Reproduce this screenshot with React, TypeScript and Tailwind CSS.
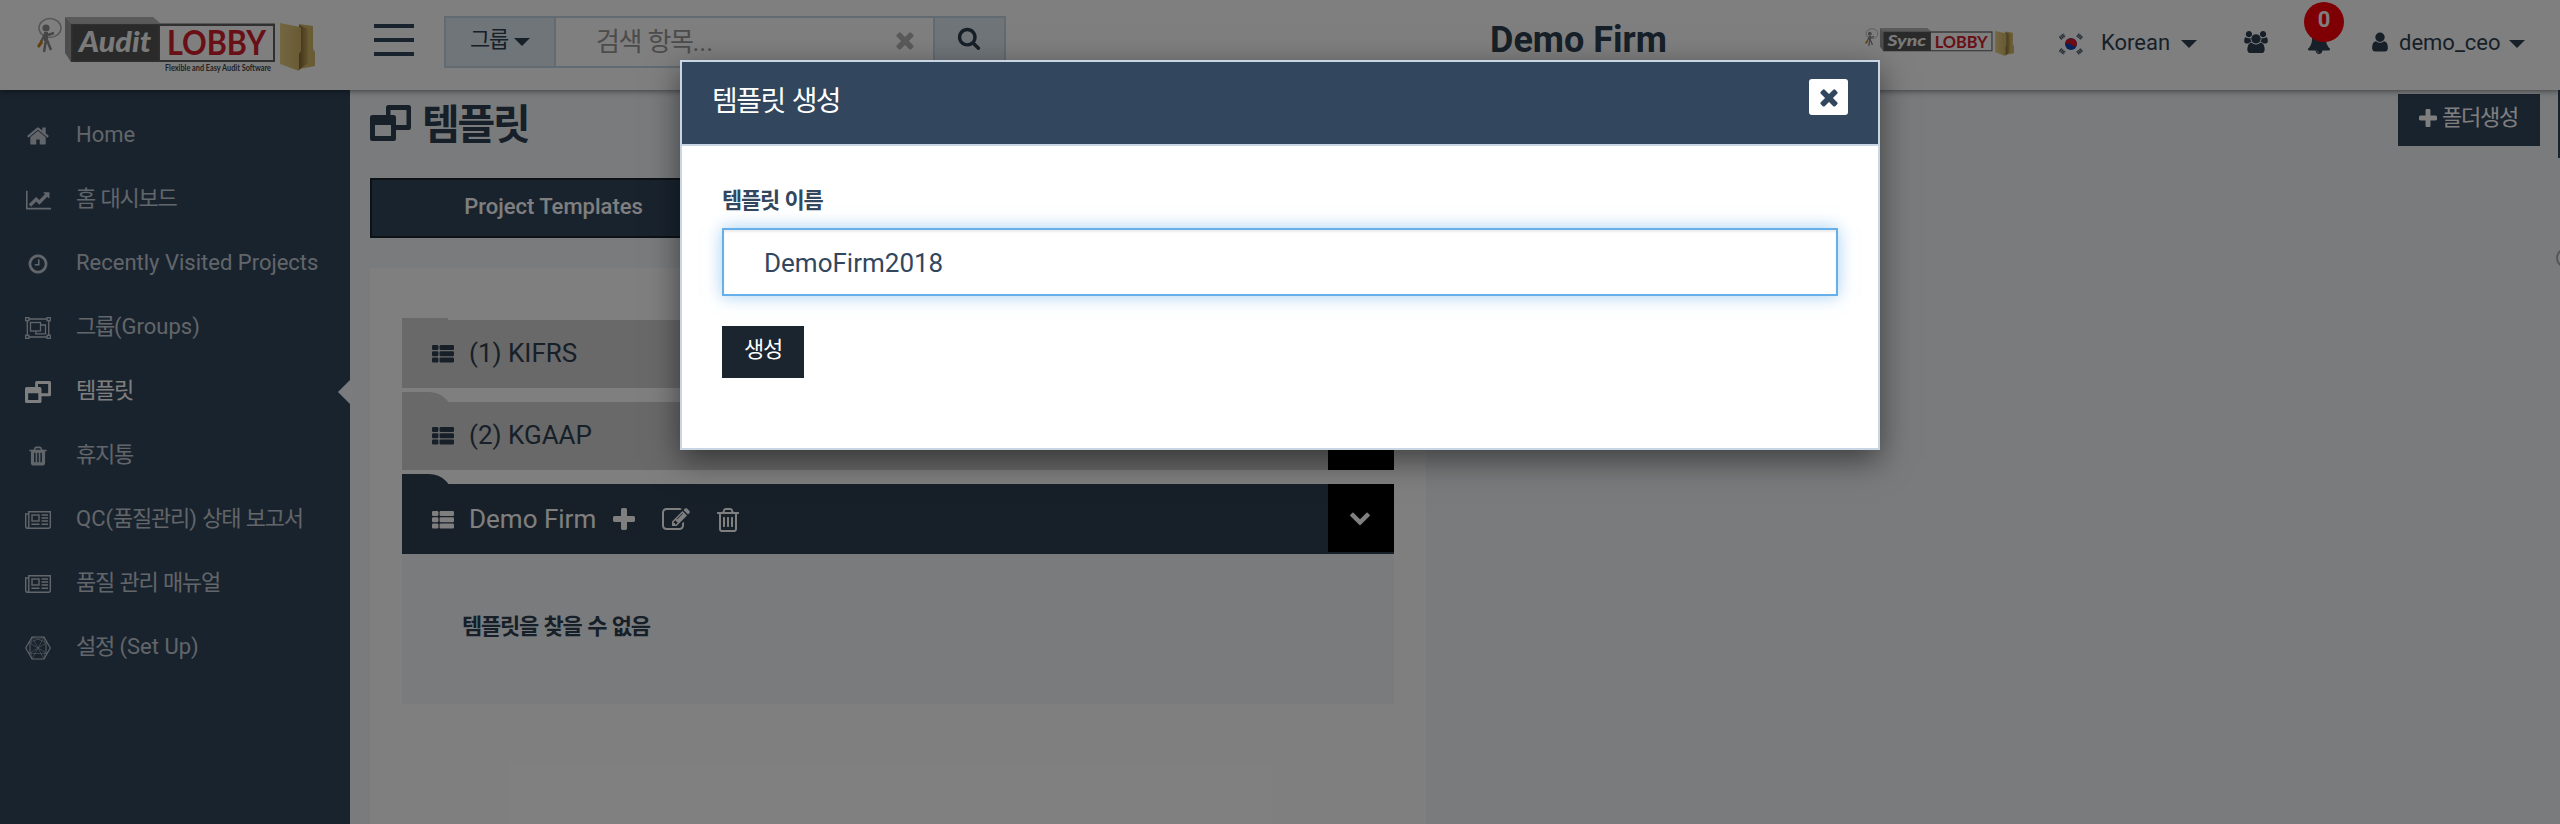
import React from "react";

type IconProps = { className?: string; box?: string; d: string };

const Icon = ({ className = "", box = "0 0 1792 1792", d }: IconProps) => (
  <svg viewBox={box} className={`shrink-0 ${className}`} fill="currentColor" aria-hidden="true">
    <path d={d} />
  </svg>
);

const TIMES =
  "M1490 1322q0 40-28 68l-136 136q-28 28-68 28t-68-28l-294-294-294 294q-28 28-68 28t-68-28l-136-136q-28-28-28-68t28-68l294-294-294-294q-28-28-28-68t28-68l136-136q28-28 68-28t68 28l294 294 294-294q28-28 68-28t68 28l136 136q28 28 28 68t-28 68l-294 294 294 294q28 28 28 68z";
const PLUS =
  "M1600 736v192q0 40-28 68t-68 28h-416v416q0 40-28 68t-68 28h-192q-40 0-68-28t-28-68v-416h-416q-40 0-68-28t-28-68v-192q0-40 28-68t68-28h416v-416q0-40 28-68t68-28h192q40 0 68 28t28 68v416h416q40 0 68 28t28 68z";
const HOME =
  "M1472 992v480q0 26-19 45t-45 19h-384v-384h-256v384h-384q-26 0-45-19t-19-45v-480q0-1 .5-3t.5-3l575-474 575 474q1 2 1 6zm223-69l-62 74q-8 9-21 11h-3q-13 0-21-7l-692-577-692 577q-12 8-24 7-13-2-21-11l-62-74q-8-10-7-23.5t11-21.5l719-599q32-26 76-26t76 26l244 204v-195q0-14 9-23t23-9h192q14 0 23 9t9 23v408l219 182q10 8 11 21.5t-7 23.5z";
const LINE_CHART =
  "M1920 1536v128h-2048v-1536h128v1408h1920zm-128-1248v435q0 21-19.5 29.5t-35.5-7.5l-121-121-633 633q-10 10-23 10t-23-10l-233-233-416 416-192-192 585-585q10-10 23-10t23 10l233 233 464-464-121-121q-16-16-7.5-35.5t29.5-19.5h435q14 0 23 9t9 23z";
const CLOCK =
  "M1024 544v448q0 14-9 23t-23 9h-320q-14 0-23-9t-9-23v-64q0-14 9-23t23-9h224v-352q0-14 9-23t23-9h64q14 0 23 9t9 23zm416 352q0-148-73-273t-198-198-273-73-273 73-198 198-73 273 73 273 198 198 273 73 273-73 198-198 73-273zm224 0q0 209-103 385.5t-279.5 279.5-385.5 103-385.5-103-279.5-279.5-103-385.5 103-385.5 279.5-279.5 385.5-103 385.5 103 279.5 279.5 103 385.5z";
const SEARCH =
  "M1216 832q0-185-131.5-316.5t-316.5-131.5-316.5 131.5-131.5 316.5 131.5 316.5 316.5 131.5 316.5-131.5 131.5-316.5zm512 832q0 52-38 90t-90 38q-54 0-90-38l-343-342q-179 124-399 124-143 0-273.5-55.5t-225-150-150-225-55.5-273.5 55.5-273.5 150-225 225-150 273.5-55.5 273.5 55.5 225 150 150 225 55.5 273.5q0 220-124 399l343 343q37 37 37 90z";
const USER =
  "M1536 1399q0 109-62.5 187t-150.5 78h-854q-88 0-150.5-78t-62.5-187q0-85 8.5-160.5t31.5-152 58.5-131 94-89 134.5-34.5q131 128 313 128t313-128q76 0 134.5 34.5t94 89 58.5 131 31.5 152 8.5 160.5zm-256-887q0 159-112.5 271.5t-271.5 112.5-271.5-112.5-112.5-271.5 112.5-271.5 271.5-112.5 271.5 112.5 112.5 271.5z";
const USERS =
  "M657 896q-162 5-265 128h-134q-82 0-138-40.5t-56-118.5q0-353 124-353 6 0 43.5 21t97.5 42.5 119 21.5q67 0 133-23-5 37-5 66 0 139 81 256zm1071 637q0 120-73 189.5t-194 69.5h-874q-121 0-194-69.5t-73-189.5q0-53 3.5-103.5t14-109 26.5-108.5 43-97.5 62-81 85.5-53.5 111.5-20q10 0 43 21.5t73 48 107 48 135 21.5 135-21.5 107-48 73-48 43-21.5q61 0 111.5 20t85.5 53.5 62 81 43 97.5 26.5 108.5 14 109 3.5 103.5zm-1024-1277q0 106-75 181t-181 75-181-75-75-181 75-181 181-75 181 75 75 181zm704 384q0 159-112.5 271.5t-271.5 112.5-271.5-112.5-112.5-271.5 112.5-271.5 271.5-112.5 271.5 112.5 112.5 271.5zm576 225q0 78-56 118.5t-138 40.5h-134q-103-123-265-128 81-117 81-256 0-29-5-66 66 23 133 23 59 0 119-21.5t97.5-42.5 43.5-21q124 0 124 353zm-128-609q0 106-75 181t-181 75-181-75-75-181 75-181 181-75 181 75 75 181z";
const EDIT =
  "M888 1184l116-116-152-152-116 116v56h96v96h56zm440-720q-16-16-33 1l-350 350q-17 17-1 33t33-1l350-350q17-17 1-33zm80 594v190q0 119-84.5 203.5t-203.5 84.5h-832q-119 0-203.5-84.5t-84.5-203.5v-832q0-119 84.5-203.5t203.5-84.5h832q63 0 117 25 15 7 18 23 3 17-9 29l-49 49q-14 14-32 8-23-6-45-6h-832q-66 0-113 47t-47 113v832q0 66 47 113t113 47h832q66 0 113-47t47-113v-126q0-13 9-22l64-64q15-15 35-7t20 29zm-96-738l288 288-672 672h-288v-288zm444 132l-92 92-288-288 92-92q28-28 68-28t68 28l152 152q28 28 28 68t-28 68z";
const TRASH_O =
  "M704 736v576q0 14-9 23t-23 9h-64q-14 0-23-9t-9-23v-576q0-14 9-23t23-9h64q14 0 23 9t9 23zm256 0v576q0 14-9 23t-23 9h-64q-14 0-23-9t-9-23v-576q0-14 9-23t23-9h64q14 0 23 9t9 23zm256 0v576q0 14-9 23t-23 9h-64q-14 0-23-9t-9-23v-576q0-14 9-23t23-9h64q14 0 23 9t9 23zm128 724v-948h-896v948q0 22 7 40.5t14.5 27 10.5 8.5h832q3 0 10.5-8.5t14.5-27 7-40.5zm-672-1076h448l-48-117q-7-9-17-11h-317q-10 2-17 11zm928 32v64q0 14-9 23t-23 9h-96v948q0 83-47 143.5t-113 60.5h-832q-66 0-113-58.5t-47-141.5v-952h-96q-14 0-23-9t-9-23v-64q0-14 9-23t23-9h309l70-167q15-37 54-63t79-26h320q40 0 79 26t54 63l70 167h309q14 0 23 9t9 23z";
const TRASH =
  "M704 1376v-704q0-14-9-23t-23-9h-64q-14 0-23 9t-9 23v704q0 14 9 23t23 9h64q14 0 23-9t9-23zm256 0v-704q0-14-9-23t-23-9h-64q-14 0-23 9t-9 23v704q0 14 9 23t23 9h64q14 0 23-9t9-23zm256 0v-704q0-14-9-23t-23-9h-64q-14 0-23 9t-9 23v704q0 14 9 23t23 9h64q14 0 23-9t9-23zm-544-992h448l-48-117q-7-9-17-11h-317q-10 2-17 11zm928 32v64q0 14-9 23t-23 9h-96v948q0 83-47 143.5t-113 60.5h-832q-66 0-113-58.5t-47-141.5v-952h-96q-14 0-23-9t-9-23v-64q0-14 9-23t23-9h309l70-167q15-37 54-63t79-26h320q40 0 79 26t54 63l70 167h309q14 0 23 9t9 23z";
const CHEVRON =
  "M1683 808l-742 741q-19 19-45 19t-45-19l-742-741q-19-19-19-45.5t19-45.5l166-165q19-19 45-19t45 19l531 531 531-531q19-19 45-19t45 19l166 165q19 19 19 45.5t-19 45.5z";
const BELL =
  "M912 1696q0-16-16-16-59 0-101.500-42.500t-42.500-101.500q0-16-16-16t-16 16q0 73 51.500 124.500t124.500 51.500q16 0 16-16zm816-288q0 52-38 90t-90 38h-448q0 106-75 181t-181 75-181-75-75-181h-448q-52 0-90-38t-38-90q50-42 91-88t85-119.500 74.500-158.500 50-206 19.500-260q0-152 117-282.500t307-158.500q-8-19-8-39 0-40 28-68t68-28 68 28 28 68q0 20-8 39 190 28 307 158.500t117 282.500q0 139 19.500 260t50 206 74.500 158.500 85 119.500 91 88z";

const ThList = ({ className = "" }: { className?: string }) => (
  <svg viewBox="0 0 22 18" className={`shrink-0 ${className}`} fill="currentColor" aria-hidden="true">
    {[0, 6.2, 12.4].map((y) => (
      <g key={y}>
        <rect x="0" y={y} width="6.4" height="5" rx="1.2" />
        <rect x="7.6" y={y} width="14.4" height="5" rx="1.2" />
      </g>
    ))}
  </svg>
);

const Windows = ({ className = "" }: { className?: string }) => (
  <svg viewBox="0 0 41 36" preserveAspectRatio="none" className={`shrink-0 ${className}`} aria-hidden="true">
    <path
      fill="currentColor"
      fillRule="evenodd"
      d="M18.500 0H38.500Q41 0 41 2.500V22.500Q41 25 38.500 25H26V33.500Q26 36 23.500 36H2.500Q0 36 0 33.500V12.500Q0 10 2.500 10H16V2.500Q16 0 18.500 0ZM20.500 5V10H23.500Q26 10 26 12.500V20H36.500V5ZM5 20V31H21V20Z"
    />
  </svg>
);

const ObjectGroup = ({ className = "" }: { className?: string }) => (
  <svg viewBox="0 0 26 22" className={`shrink-0 ${className}`} fill="none" stroke="currentColor" strokeWidth="1.300" aria-hidden="true">
    <path d="M4 2H22M4 20H22M2.300 4V18M23.700 4V18" />
    <rect x="0.700" y="0.700" width="3.200" height="3" />
    <rect x="22.100" y="0.700" width="3.200" height="3" />
    <rect x="0.700" y="18.300" width="3.200" height="3" />
    <rect x="22.100" y="18.300" width="3.200" height="3" />
    <rect x="5.500" y="5.500" width="10" height="8.500" />
    <path d="M15.500 8H20.500V16.800H10.800V14" />
  </svg>
);

const Newspaper = ({ className = "" }: { className?: string }) => (
  <svg viewBox="0 0 26 18" className={`shrink-0 ${className}`} fill="none" stroke="currentColor" strokeWidth="1.400" aria-hidden="true">
    <path d="M3.800 3H.7V15.300Q.7 17.300 2.300 17.300H23.500Q25.300 17.300 25.300 15.500V.7H3.800V15.300Q3.800 17.300 2.300 17.300" />
    <rect x="7" y="4" width="7" height="6" />
    <path d="M16.500 4H23M16.500 7H23M16.500 10H23M6.500 13.300H14.500M16.500 13.300H23" />
  </svg>
);

const Hexagon = ({ className = "" }: { className?: string }) => (
  <svg viewBox="0 0 26 24" className={`shrink-0 ${className}`} fill="none" stroke="currentColor" strokeWidth="0.500" aria-hidden="true">
    <path strokeWidth="1.100" d="M7 1H19L25.300 12 19 23H7L.7 12Z" />
    <path d="M7 1L19 23M19 1L7 23M7 1L4 17.500 13 12 22 6.500 7 1M19 1L4 6.500 13 12 22 17.500 19 1M4 17.500H22M4 6.500L7 23M22 6.500L19 23" />
  </svg>
);

const Caret = ({ className = "" }: { className?: string }) => (
  <svg viewBox="0 0 16 8" className={`h-2 w-4 shrink-0 ${className}`} fill="currentColor" aria-hidden="true">
    <path d="M0 0H16L8 8Z" />
  </svg>
);

/* Hangul runs are set slightly tighter than Latin ones. */
const T = ({ children }: { children: string }) => (
  <>
    {children.split(/([가-힣]+)/).map((run, i) =>
      i % 2 ? (
        <span key={i} className="tracking-[-0.055em]">
          {run}
        </span>
      ) : (
        run
      ),
    )}
  </>
);

const Logo = ({ word, tagline, className }: { word: string; tagline?: string; className: string }) => (
  <svg viewBox="0 0 280 58" preserveAspectRatio="none" className={`shrink-0 ${className}`} aria-hidden="true">
    <defs>
      <linearGradient id="folder" x1="0" x2="1">
        <stop offset="0" stopColor="#e6cf86" />
        <stop offset="1" stopColor="#d2b464" />
      </linearGradient>
      <linearGradient id="fold" x1="0" x2="1">
        <stop offset="0" stopColor="#7d6835" />
        <stop offset="1" stopColor="#caab5c" />
      </linearGradient>
    </defs>
    <g fill="none" stroke="#8c8c8c">
      <ellipse cx="13" cy="11" rx="11" ry="9.500" strokeWidth="1.600" stroke="#b0b0b0" />
      <path strokeWidth="4" d="M9 15V24" />
      <path strokeWidth="2.500" d="M9 23L7 35M10 23L14 33M8 17L4 25M11 18L17 16" />
    </g>
    <circle cx="9" cy="11" r="3.600" fill="#909090" />
    <path d="M4 23L0 29 2 31 6 26Z" fill="#c98218" />
    <path d="M28 0H116L123 6H34Z" fill="#b5b5b5" />
    <path d="M28 0L34 6V45L28 36Z" fill="#9b9b9b" />
    <rect x="34" y="6.500" width="204" height="38.500" fill="#606060" />
    <rect x="123" y="9" width="113" height="34" fill="#fff" />
    <rect x="35.500" y="8" width="86" height="35.500" fill="#555" />
    <text x="42" y="35" fontFamily="Lato, sans-serif" fontWeight="900" fontStyle="italic" fontSize="28" fill="#f4f4f4" textLength="72" lengthAdjust="spacingAndGlyphs">
      {word}
    </text>
    <text x="130" y="38" fontFamily="Lato, sans-serif" fontWeight="700" fontSize="34" fill="#d2202e" textLength="99" lengthAdjust="spacingAndGlyphs">
      LOBBY
    </text>
    {tagline && (
      <text x="128" y="54" fontFamily="Lato, sans-serif" fontWeight="700" fontSize="8.500" fill="#444" textLength="106" lengthAdjust="spacingAndGlyphs">
        {tagline}
      </text>
    )}
    <path d="M262 7L276 9V32L278 35V49L262 52Z" fill="#d3b666" />
    <path d="M262 8L271 12V46L262 53Z" fill="url(#fold)" />
    <path d="M243 6L263 10Q264 10 264 12V34L262 37V54L243 47Z" fill="url(#folder)" />
  </svg>
);

const Flag = () => (
  <svg viewBox="0 0 24 22" className="h-[22px] w-6 shrink-0" aria-hidden="true">
    <circle cx="12" cy="11" r="6" fill="#1540b0" />
    <path d="M6.300 9.500A6 6 0 0 1 17.900 12Q15 14.500 12 11.500 9 8.500 6.300 12Z" fill="#e01525" />
    <g stroke="#4d5e6e" strokeWidth="4" strokeDasharray="1.400 0.400">
      <path d="M1 5.500L5.500 1.700M18.500 1.700L23 5.500M1 16.500L5.500 20.300M18.500 20.300L23 16.500" />
    </g>
  </svg>
);

const NAV = [
  { label: "Home", icon: <Icon d={HOME} className="size-6" /> },
  { label: "홈 대시보드", icon: <Icon d={LINE_CHART} box="-128 0 2048 1792" className="h-[22px] w-[25px]" /> },
  { label: "Recently Visited Projects", icon: <Icon d={CLOCK} className="size-[22px]" /> },
  { label: "그룹(Groups)", icon: <ObjectGroup className="h-[22px] w-[26px]" /> },
  { label: "템플릿", icon: <Windows className="h-[22px] w-[26px]" />, active: true },
  { label: "휴지통", icon: <Icon d={TRASH} className="size-[22px]" /> },
  { label: "QC(품질관리) 상태 보고서", icon: <Newspaper className="h-[18px] w-[26px]" /> },
  { label: "품질 관리 매뉴얼", icon: <Newspaper className="h-[18px] w-[26px]" /> },
  { label: "설정 (Set Up)", icon: <Hexagon className="h-6 w-[26px]" /> },
];

const Header = () => (
  <header className="relative z-10 flex h-[90px] shrink-0 items-start bg-white text-[#2e3e50] shadow-[0_1px_6px_rgba(0,0,0,0.5)]">
    <Logo word="Audit" tagline="Flexible and Easy Audit Software" className="mt-[17px] ml-[37px] h-[58px] w-[280px]" />
    <button className="mt-6 ml-[57px] flex w-10 flex-col gap-2.5">
      <span className="h-1 bg-[#32465d]" />
      <span className="h-1 bg-[#32465d]" />
      <span className="h-1 bg-[#32465d]" />
    </button>
    <div className="mt-4 ml-[30px] flex h-[52px] w-[562px] border-2 border-[#c5d6e2]">
      <button className="flex w-[110px] items-start border-r-2 border-[#c5d6e2] bg-[#e1ebf2] pl-6 text-[22px] leading-[44px]">
        <T>그룹</T>
        <Caret className="mt-5 ml-1.5" />
      </button>
      <div className="flex w-[377px] items-start bg-white pl-10 text-[26px] leading-[48px] text-[#999]">
        <span className="grow">
          <T>검색 항목...</T>
        </span>
        <Icon d={TIMES} className="mt-[9px] mr-[15px] size-[26px] text-[#b5b5b5]" />
      </div>
      <button className="flex grow justify-center border-l-2 border-[#c5d6e2] bg-[#e1ebf2] pt-2 pr-0.5">
        <Icon d={SEARCH} className="size-6" />
      </button>
    </div>
    <h1 className="ml-[484px] w-[180px] text-[36px] leading-[80px] font-bold whitespace-nowrap">Demo Firm</h1>
    <Logo word="Sync" className="mt-7 ml-[195px] h-[30px] w-[150px]" />
    <div className="mt-[33px] ml-11">
      <Flag />
    </div>
    <div className="ml-[18px] flex text-[22px] leading-[85px]">
      <span className="w-[70px]">Korean</span>
      <Caret className="mt-10 ml-2.5" />
    </div>
    <Icon d={USERS} box="64 0 1920 1792" className="mt-[31px] ml-[47px] h-[22px] w-6" />
    <div className="relative mt-[30px] ml-[39px]">
      <Icon d={BELL} className="size-6" />
      <span className="absolute -top-7 -left-[3px] size-10 rounded-full bg-[#ff0008] text-center text-[22px] leading-[36px] font-bold text-white">0</span>
    </div>
    <Icon d={USER} className="mt-[31px] ml-[38px] size-[22px]" />
    <div className="ml-2 flex text-[22px] leading-[85px]">
      <span className="w-[102px]">demo_ceo</span>
      <Caret className="mt-10 ml-2" />
    </div>
  </header>
);

const Sidebar = () => (
  <nav className="w-[350px] shrink-0 bg-[#32465c] pt-3.5 text-[#c4cbd2]">
    {NAV.map(({ label, icon, active }) => (
      <a key={label} className={`relative flex h-16 items-center ${active ? "text-white" : ""}`}>
        <span className="ml-6 flex w-7 justify-center">{icon}</span>
        <span className="ml-6 pb-[3px] text-[22px] leading-7 whitespace-nowrap">
          <T>{label}</T>
        </span>
        {active && (
          <span className="absolute top-5 right-0 h-6 w-3 bg-[#f4f6f9] [clip-path:polygon(100%_0,0_50%,100%_100%)]" />
        )}
      </a>
    ))}
  </nav>
);

const FolderTab = ({ className }: { className: string }) => <span className={`absolute left-0 rounded-tr-[24px] ${className}`} />;

const Toggle = () => (
  <button className="flex h-[68px] w-[66px] items-start justify-center bg-black pt-[22px] pr-0.5 text-white">
    <Icon d={CHEVRON} className="h-[22px] w-[22px]" />
  </button>
);

const TemplateRows = () => (
  <div className="text-[26px] leading-[66px] text-[#2e3e50]">
    <div className="relative flex h-[68px] items-start bg-[#d2d2d2]">
      <span className="absolute -top-0.5 left-0 h-0.5 w-[46px] bg-[#d2d2d2]" />
      <ThList className="mt-[25px] ml-[30px] h-[18px] w-[22px]" />
      <span className="ml-[15px] grow">(1) KIFRS</span>
      <Toggle />
    </div>
    <div className="relative mt-3.5 flex h-[68px] items-start bg-[#d2d2d2]">
      <FolderTab className="-top-2.5 h-10 w-[51px] bg-[#d2d2d2]" />
      <ThList className="relative mt-[25px] ml-[30px] h-[18px] w-[22px]" />
      <span className="relative ml-[15px] grow">(2) KGAAP</span>
      <Toggle />
    </div>
    <div className="relative mt-3.5 flex h-[70px] items-start bg-[#2f3f52] text-white">
      <FolderTab className="-top-2.5 h-10 w-[51px] bg-[#2f3f52]" />
      <ThList className="relative mt-[27px] ml-[30px] h-[18px] w-[22px]" />
      <span className="relative ml-[15px] leading-[70px]">Demo Firm</span>
      <Icon d={PLUS} box="192 128 1408 1408" className="mt-6 ml-[17px] size-[22px]" />
      <Icon d={EDIT} box="0 128 1792 1408" className="mt-6 ml-[27px] h-[22px] w-7" />
      <Icon d={TRASH_O} box="192 128 1408 1536" className="mt-6 ml-[27px] h-6 w-[22px]" />
      <span className="grow" />
      <Toggle />
    </div>
    <div className="h-[150px] bg-[#f5f7fa] pl-[60px] text-[22px] leading-[145px] font-bold">
      <T>템플릿을 찾을 수 없음</T>
    </div>
  </div>
);

const Content = () => (
  <main className="flex grow flex-col overflow-hidden bg-[#f4f6f9] pl-5 text-[#2e3e50]">
    <div className="flex h-[88px] items-start">
      <Windows className="mt-[15px] h-9 w-[41px]" />
      <h2 className="ml-[11px] grow text-[41px] leading-[71px] font-bold">
        <T>템플릿</T>
      </h2>
      <button className="mt-1 flex h-[52px] w-[142px] bg-[#32465c] pl-[21px] text-[22px] leading-[48px] text-white">
        <Icon d={PLUS} box="192 128 1408 1408" className="mt-[15px] size-[18px]" />
        <span className="ml-[5px] whitespace-nowrap">
          <T>폴더생성</T>
        </span>
      </button>
      <span className="ml-[18px] h-[68px] w-0.5 bg-[#32465c]" />
    </div>
    <div className="flex h-[90px]">
      <button className="h-[60px] w-[367px] border-2 border-[#1a242f] bg-[#32465c] pb-0.5 text-[22px] leading-[54px] font-medium text-white">
        Project Templates
      </button>
      <span className="grow" />
      <span className="relative mt-[70px] h-5 w-1 overflow-hidden">
        <span className="absolute top-0 left-0 size-5 rounded-full border-2 border-[#aaa] bg-white" />
      </span>
    </div>
    <section className="w-[1056px] grow bg-white px-8 pt-[52px]">
      <TemplateRows />
    </section>
  </main>
);

const Dialog = () => (
  <div role="dialog" className="h-[390px] w-[1200px] border-2 border-[#c8d5e4] bg-white text-[#32465d] shadow-[0_10px_30px_rgba(0,0,0,0.5)]">
    <div className="flex h-[84px] items-start justify-between border-b-2 border-[#c8d5e4] bg-[#32465d] pr-[30px] pl-[30px]">
      <h3 className="text-[28px] leading-[80px] font-normal text-white">
        <T>템플릿 생성</T>
      </h3>
      <button className="mt-[17px] flex h-9 w-[39px] items-center justify-center rounded-[3px] bg-white">
        <Icon d={TIMES} className="size-[26px]" />
      </button>
    </div>
    <div className="px-10 pt-9">
      <label className="block h-[46px] text-[22px] leading-[37px] font-semibold">
        <T>템플릿 이름</T>
      </label>
      <input
        readOnly
        value="DemoFirm2018"
        className="block h-[68px] w-full border-2 border-[#66afe9] bg-white pt-0.5 pl-10 text-[26px] shadow-[inset_0_2px_2px_rgba(0,0,0,0.075),0_0_16px_rgba(102,175,233,0.6)] outline-none"
      />
      <button className="mt-[30px] block h-[52px] w-[82px] bg-[#1b252f] text-[22px] leading-[46px] text-white">
        <span className="block pb-1">
          <T>생성</T>
        </span>
      </button>
    </div>
  </div>
);

export default function App() {
  return (
    <div className="relative flex h-[824px] w-[2560px] flex-col overflow-hidden font-[Roboto,'Noto_Sans_CJK_KR',sans-serif]">
      <Header />
      <div className="flex grow">
        <Sidebar />
        <Content />
      </div>
      <div className="absolute inset-0 z-20 flex items-start justify-center bg-black/50 pt-[60px]">
        <Dialog />
      </div>
    </div>
  );
}
